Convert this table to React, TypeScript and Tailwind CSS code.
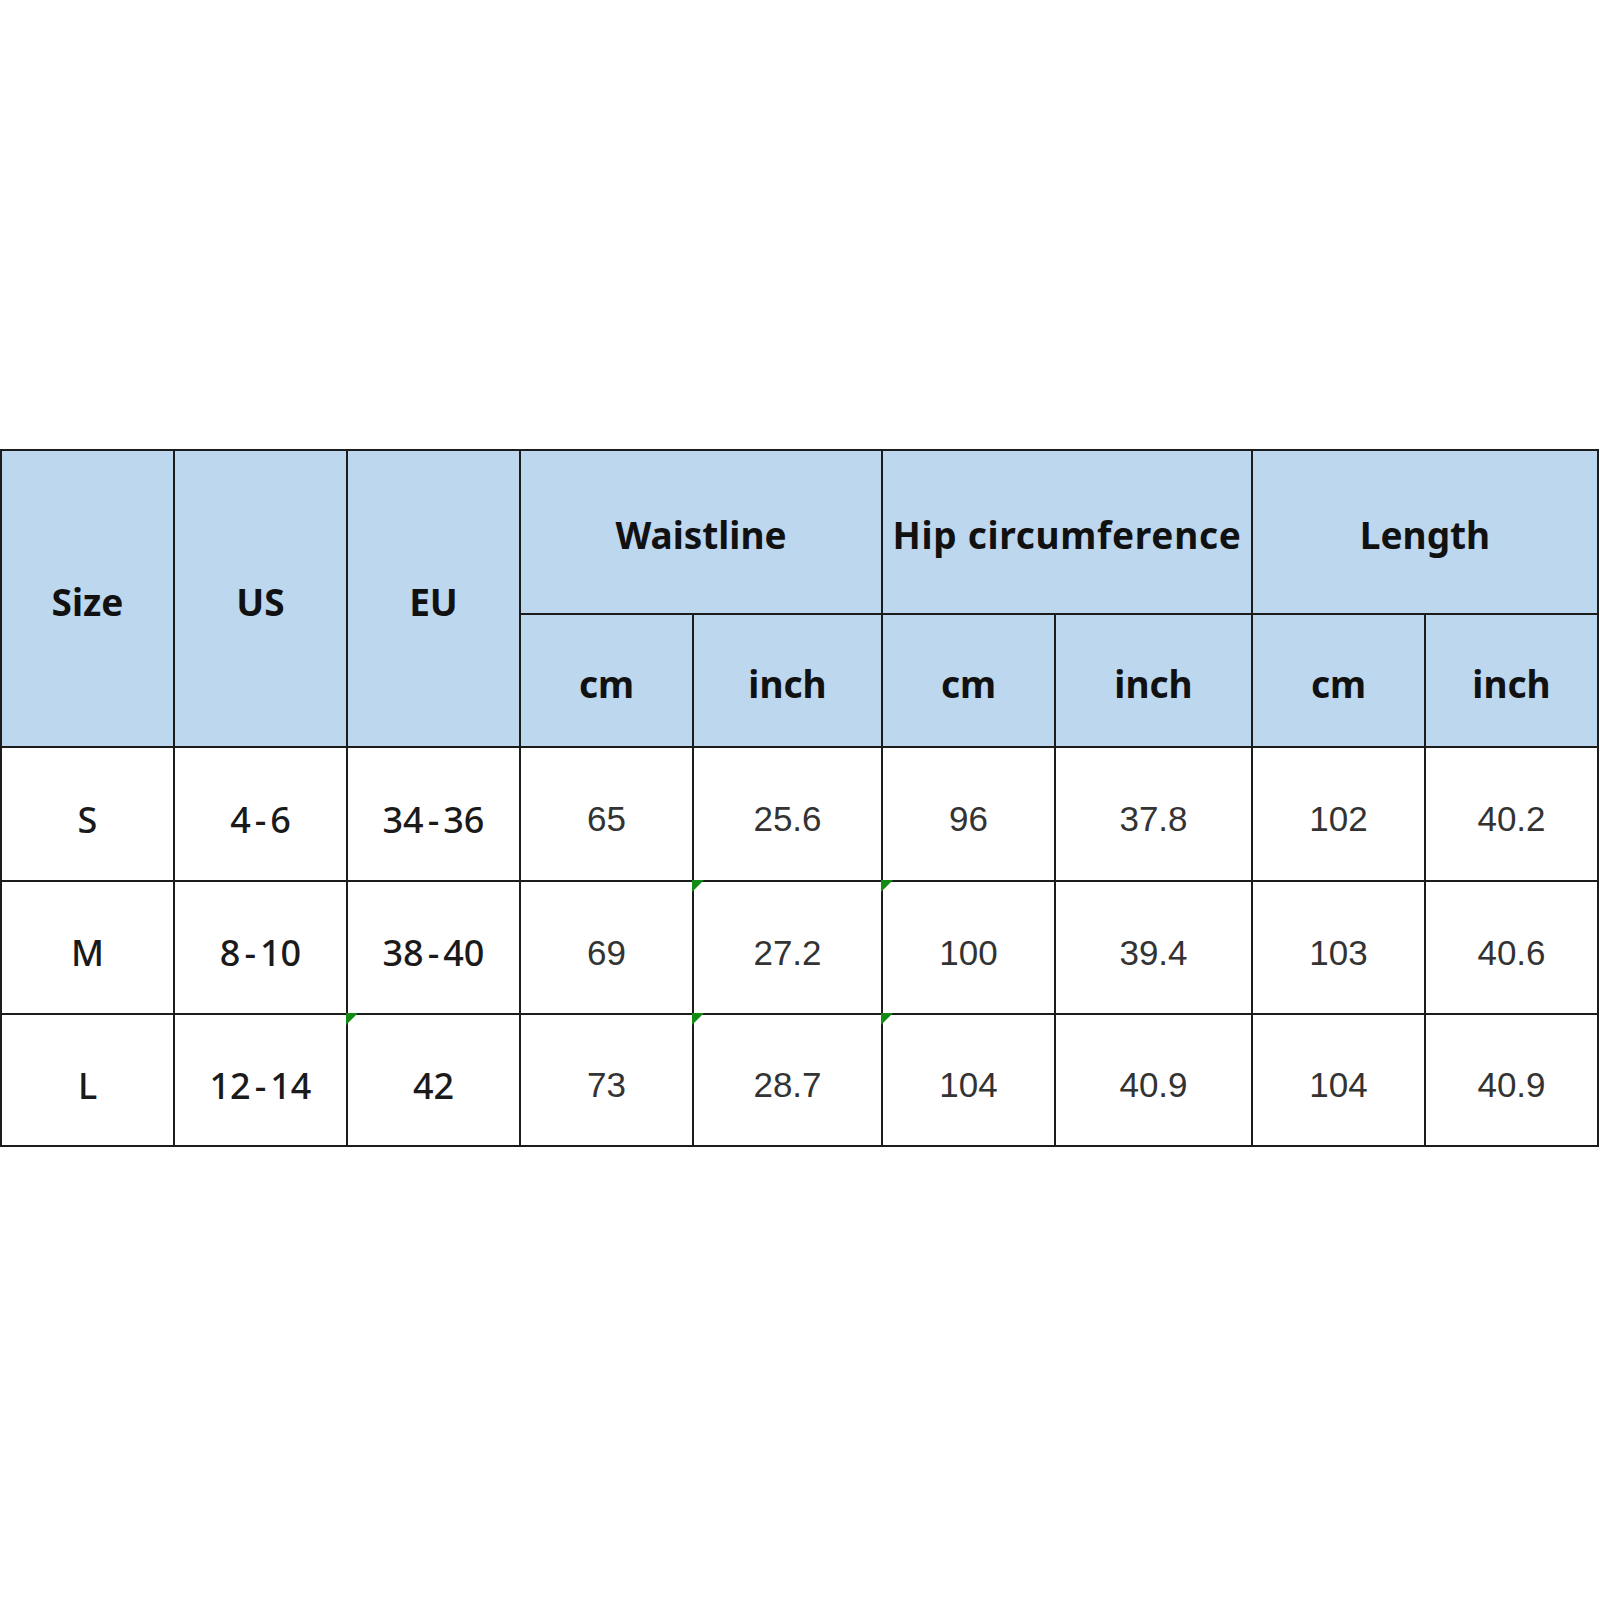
import React from "react";

const headFont = { fontFamily: '"Noto Sans", "Open Sans", sans-serif' };

type Row = { size: string; us: string; eu: string; vals: string[]; marks: number[] };

const rows: Row[] = [
  { size: "S", us: "4-6", eu: "34-36", vals: ["65", "25.6", "96", "37.8", "102", "40.2"], marks: [] },
  { size: "M", us: "8-10", eu: "38-40", vals: ["69", "27.2", "100", "39.4", "103", "40.6"], marks: [4, 5] },
  { size: "L", us: "12-14", eu: "42", vals: ["73", "28.7", "104", "40.9", "104", "40.9"], marks: [2, 4, 5] },
];

function Mark() {
  return (
    <span className="absolute left-[-2px] top-[-2px] w-0 h-0 border-t-[12px] border-t-[#138a13] border-r-[12px] border-r-transparent" />
  );
}

function Range({ text }: { text: string }) {
  const parts = text.split("-");
  if (parts.length < 2) return <>{text}</>;
  return (
    <>
      {parts[0]}
      <span className="mx-[4px]">-</span>
      {parts[1]}
    </>
  );
}

function Head({ children, className = "" }: { children: React.ReactNode; className?: string }) {
  return (
    <div
      className={`bg-[#bdd7ee] flex items-center justify-center text-[37px] font-bold text-[#111] pt-[6px] ${className}`}
      style={headFont}
    >
      {children}
    </div>
  );
}

export default function App() {
  return (
    <div className="w-[1600px] h-[1600px] bg-white pt-[449px]">
      <div className="grid w-fit grid-cols-[171px_171px_171px_171px_187px_171px_195px_171px_171px] grid-rows-[162px_131px_132px_131px_130px] gap-[2px] p-[2px] bg-[#1c1c1c]">
        <Head className="row-span-2">Size</Head>
        <Head className="row-span-2">US</Head>
        <Head className="row-span-2">EU</Head>
        <Head className="col-span-2">Waistline</Head>
        <Head className="col-span-2 tracking-[0.7px] whitespace-nowrap">Hip circumference</Head>
        <Head className="col-span-2">Length</Head>
        <Head>cm</Head>
        <Head>inch</Head>
        <Head>cm</Head>
        <Head>inch</Head>
        <Head>cm</Head>
        <Head>inch</Head>
        {rows.map((r) => (
          <React.Fragment key={r.size}>
            {[r.size, r.us, r.eu].map((t, i) => (
              <div
                key={`a${i}`}
                className="relative bg-white flex items-center justify-center text-[36px] font-medium text-[#1a1a1a] pt-[11px]"
                style={headFont}
              >
                {r.marks.includes(i) && <Mark />}
                <Range text={t} />
              </div>
            ))}
            {r.vals.map((t, i) => (
              <div
                key={`b${i}`}
                className="relative bg-white flex items-center justify-center text-[35px] text-[#333] pt-[11px]"
                style={{ fontFamily: '"Liberation Sans", Arial, sans-serif' }}
              >
                {r.marks.includes(i + 3) && <Mark />}
                {t}
              </div>
            ))}
          </React.Fragment>
        ))}
      </div>
    </div>
  );
}
